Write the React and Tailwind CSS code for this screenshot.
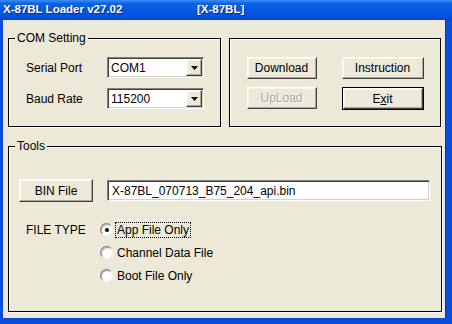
import React from 'react'

const sunken = 'border border-t-[#808080] border-l-[#808080] border-r-white border-b-white shadow-[inset_1px_1px_0_#404040,inset_-1px_-1px_0_#d4d0c8]'
const raised = 'border border-t-white border-l-white border-r-[#404040] border-b-[#404040] shadow-[inset_-1px_-1px_0_#aca899,inset_1px_1px_0_#f7f6f0]'

function Group({ label, className, children }) {
  return (
    <div className={`relative border border-black shadow-[1px_1px_0_#fff,inset_1px_1px_0_#fff] ${className}`}>
      {label && (
        <span className="absolute -top-[8px] left-[6px] px-[2px] bg-[#ece9d8] leading-[14px]">{label}</span>
      )}
      {children}
    </div>
  )
}

function Combo({ value }) {
  return (
    <div className={`flex items-center w-[97px] h-[21px] bg-white ${sunken}`}>
      <span className="flex-1 pl-[3px] leading-none">{value}</span>
      <div className={`w-[16px] h-[17px] mr-[1px] bg-[#ece9d8] flex items-center justify-center ${raised}`}>
        <svg width="7" height="4" viewBox="0 0 7 4">
          <path d="M0 0h7L3.5 4z" fill="#000" />
        </svg>
      </div>
    </div>
  )
}

function Btn({ children, className, disabled, isDefault }) {
  const inner = (
    <div className={`flex items-center justify-center w-full h-full bg-[#ece9d8] ${raised}`}>
      <span className={disabled ? 'text-[#aca899] [text-shadow:1px_1px_0_#fff]' : 'text-black'}>{children}</span>
    </div>
  )
  if (isDefault) {
    return <div className={`border border-black ${className}`}>{inner}</div>
  }
  return <div className={className}>{inner}</div>
}

function Radio({ checked, label, focus }) {
  return (
    <div className="flex items-center h-[23px]">
      <div className="w-[13px] h-[13px] rounded-full bg-white border border-t-[#808080] border-l-[#808080] border-r-[#f4f3ee] border-b-[#f4f3ee] shadow-[inset_1px_1px_1px_#aca899] flex items-center justify-center">
        {checked && <div className="w-[4px] h-[4px] rounded-full bg-black" />}
      </div>
      <span className={`leading-[14px] ${focus ? 'ml-[3px] px-[1px] outline outline-1 outline-dotted outline-black' : 'ml-[4px]'}`}>
        {label}
      </span>
    </div>
  )
}

export default function App() {
  return (
    <div className="w-[452px] h-[324px] flex flex-col bg-[#0a4ddc] font-['Liberation_Sans',Arial,sans-serif] text-[12px] text-black overflow-hidden">

      {/* Title bar */}
      <div className="h-[20px] flex items-center pl-[3px] bg-[linear-gradient(to_bottom,#3d8ef7_0%,#0a61e4_18%,#0458e2_55%,#0550dc_85%,#0a46c8_100%)] text-white font-bold text-[11.5px] [text-shadow:1px_1px_0_#0a2a8c]">
        <span className="w-[194px]">X-87BL Loader v27.02</span>
        <span>[X-87BL]</span>
      </div>

      {/* Client area */}
      <div className="flex-1 ml-[3px] mr-[6px] mb-[6px] bg-[#ece9d8] pt-[18px] pl-[5px] pr-[4px] border-r border-r-[#0736b0]">

        <div className="flex gap-[8px]">
          <Group label="COM Setting" className="w-[213px] h-[89px]">
            <div className="pl-[17px] pt-[18px] flex flex-col gap-[10px]">
              <div className="flex items-center">
                <span className="w-[81px]">Serial Port</span>
                <Combo value="COM1" />
              </div>
              <div className="flex items-center">
                <span className="w-[81px]">Baud Rate</span>
                <Combo value="115200" />
              </div>
            </div>
          </Group>

          <Group className="w-[213px] h-[89px]">
            <div className="pl-[17px] pt-[18px] grid grid-cols-[70px_82px] gap-x-[25px] gap-y-[8px]">
              <Btn className="h-[22px]">Download</Btn>
              <Btn className="h-[22px]">Instruction</Btn>
              <Btn className="h-[22px]" disabled>UpLoad</Btn>
              <Btn className="h-[23px]" isDefault>
                E<span className="underline">x</span>it
              </Btn>
            </div>
          </Group>
        </div>

        <Group label="Tools" className="mt-[19px] w-[434px] h-[166px]">
          <div className="pl-[10px] pt-[32px] flex items-center">
            <Btn className="w-[74px] h-[23px]">BIN File</Btn>
            <div className={`ml-[14px] w-[323px] h-[21px] bg-white flex items-center pl-[4px] ${sunken}`}>
              X-87BL_070713_B75_204_api.bin
            </div>
          </div>

          <div className="pl-[17px] mt-[16px] flex">
            <span className="w-[74px] h-[23px] flex items-center">FILE TYPE</span>
            <div className="flex flex-col">
              <Radio checked focus label="App File Only" />
              <Radio label="Channel Data File" />
              <Radio label="Boot File Only" />
            </div>
          </div>
        </Group>

      </div>
    </div>
  )
}
